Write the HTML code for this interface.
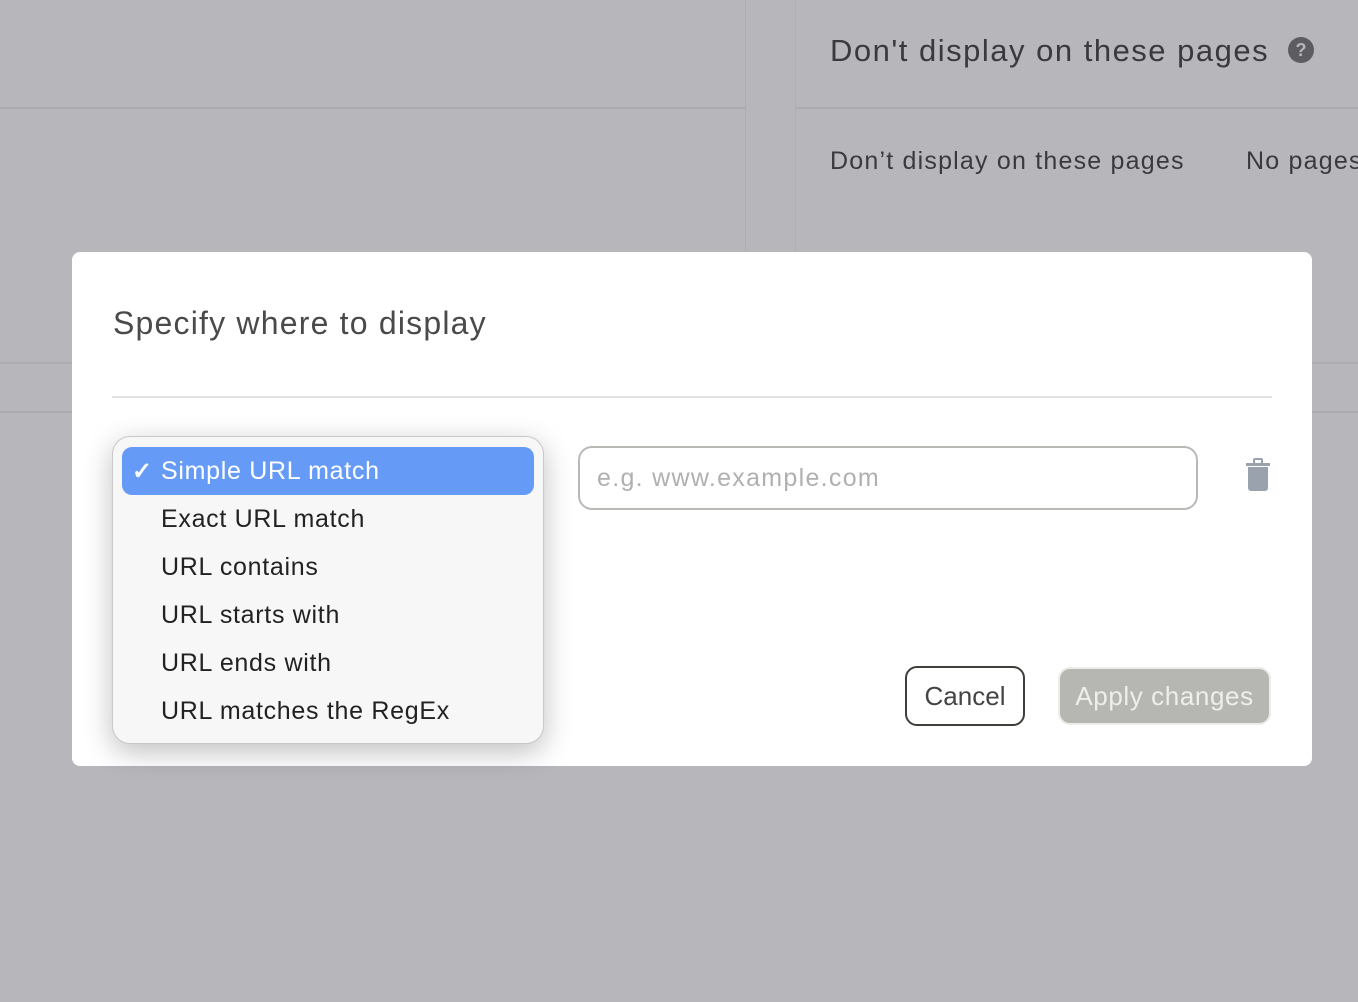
<!DOCTYPE html>
<html><head><meta charset="utf-8"><style>
*{margin:0;padding:0;box-sizing:border-box}
body{width:1358px;height:1002px;background:#b7b6bb;position:relative;overflow:hidden;font-family:"Liberation Sans",sans-serif;color:#3d3d40}
.abs{position:absolute;white-space:nowrap}
.modal{left:72px;top:252px;width:1240px;height:514px;background:#fff;border-radius:8px}
.menu{left:112px;top:436px;width:432px;height:308px;background:#f7f7f7;border:1px solid #c8c8c8;border-radius:18px;box-shadow:0 8px 28px rgba(0,0,0,.25)}
.item{position:absolute;left:48px;font-size:25px;color:#222;letter-spacing:0.7px}
</style></head><body>
<div class="abs" style="left:745px;top:0;width:1px;height:252px;background:#aeadb2"></div>
<div class="abs" style="left:795px;top:0;width:1px;height:252px;background:#aeadb2"></div>
<div class="abs" style="left:0;top:107px;width:745px;height:2px;background:#acabb0"></div>
<div class="abs" style="left:796px;top:107px;width:562px;height:2px;background:#acabb0"></div>
<div class="abs" style="left:0;top:362px;width:72px;height:2px;background:#acabb0"></div>
<div class="abs" style="left:0;top:411px;width:72px;height:2px;background:#acabb0"></div>
<div class="abs" style="left:1312px;top:362px;width:46px;height:2px;background:#acabb0"></div>
<div class="abs" style="left:1312px;top:411px;width:46px;height:2px;background:#acabb0"></div>
<div class="abs" style="left:830px;top:33px;font-size:31px;color:#3a3a3d;letter-spacing:1.5px">Don't display on these pages</div>
<div class="abs" style="left:1288px;top:37px;width:26px;height:26px;border-radius:50%;background:#5d5d61;color:#b7b6bb;font-size:18px;font-weight:bold;text-align:center;line-height:26px">?</div>
<div class="abs" style="left:830px;top:147px;font-size:25px;color:#3a3a3d;letter-spacing:1.2px">Don’t display on these pages</div>
<div class="abs" style="left:1246px;top:147px;font-size:25px;color:#3a3a3d;letter-spacing:1.2px">No pages</div>

<div class="abs modal"></div>
<div class="abs" style="left:113px;top:305px;font-size:32px;color:#4a4a4d;letter-spacing:1.2px">Specify where to display</div>
<div class="abs" style="left:112px;top:396px;width:1160px;height:2px;background:#e2e2e2"></div>
<div class="abs" style="left:578px;top:446px;width:620px;height:64px;border:2px solid #b9b9b5;border-radius:14px;padding-left:17px;line-height:60px;font-size:25px;color:#b0b0b0;letter-spacing:1.3px">e.g. www.example.com</div>
<svg class="abs" style="left:1245px;top:458px" width="26" height="34" viewBox="0 0 26 34"><rect x="1" y="5" width="24" height="3" fill="#9aa2ad"/><rect x="9" y="1" width="8" height="5" rx="1" fill="none" stroke="#9aa2ad" stroke-width="2"/><path d="M3 9h20v21a3 3 0 0 1-3 3H6a3 3 0 0 1-3-3z" fill="#9aa2ad"/></svg>
<div class="abs" style="left:905px;top:666px;width:120px;height:60px;border:2px solid #3e3e3a;border-radius:12px;text-align:center;line-height:56px;font-size:26px;color:#444">Cancel</div>
<div class="abs" style="left:1058px;top:667px;width:213px;height:58px;background:#b6b7b2;border:2px solid #ecece9;border-radius:12px;text-align:center;line-height:54px;font-size:26px;color:#eeeeea;letter-spacing:0.6px">Apply changes</div>

<div class="abs menu">
<div class="abs" style="left:9px;top:10px;width:412px;height:48px;background:#659bf7;border-radius:10px"></div>
<div class="abs" style="left:19px;top:20px;font-size:24px;color:#fff;font-weight:bold">✓</div>
<div class="item" style="top:20px;color:#fff">Simple URL match</div>
<div class="item" style="top:68px">Exact URL match</div>
<div class="item" style="top:116px">URL contains</div>
<div class="item" style="top:164px">URL starts with</div>
<div class="item" style="top:212px">URL ends with</div>
<div class="item" style="top:260px">URL matches the RegEx</div>
</div>
</body></html>
